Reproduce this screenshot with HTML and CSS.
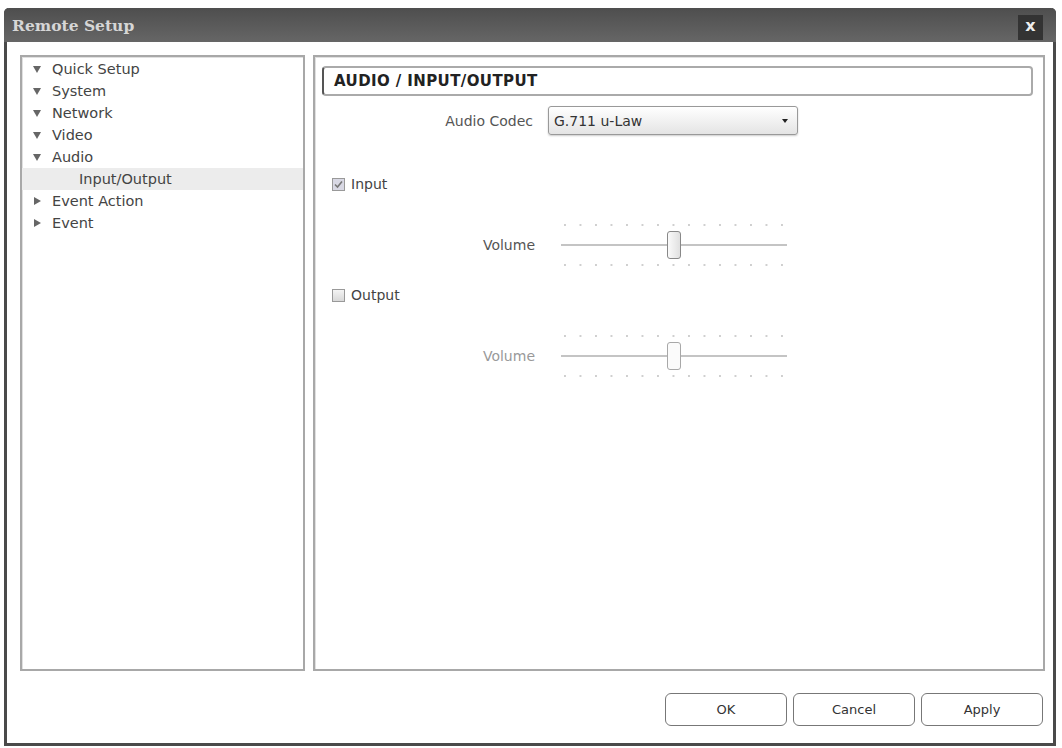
FILE: index.html
```html
<!DOCTYPE html>
<html lang="en">
<head>
    <meta charset="UTF-8">
    <title>Remote Setup</title>
    <link rel="stylesheet" href="styles.css">
</head>
<body>
    <!-- Окно настроек -->
    <div class="dialog">
        <div class="title-bar">
            <span class="title">Remote Setup</span>
            <span class="close-btn">x</span>
        </div>

        <div class="dialog-body">
            <!-- Дерево разделов -->
            <div class="tree-panel">
                <div class="tree-item"><span class="arrow down"></span>Quick Setup</div>
                <div class="tree-item"><span class="arrow down"></span>System</div>
                <div class="tree-item"><span class="arrow down"></span>Network</div>
                <div class="tree-item"><span class="arrow down"></span>Video</div>
                <div class="tree-item"><span class="arrow down"></span>Audio</div>
                <div class="tree-item sub selected">Input/Output</div>
                <div class="tree-item"><span class="arrow right"></span>Event Action</div>
                <div class="tree-item"><span class="arrow right"></span>Event</div>
            </div>

            <!-- Страница настроек -->
            <div class="content-panel">
                <div class="section-head">AUDIO / INPUT/OUTPUT</div>

                <div class="codec-row">
                    <span class="codec-label">Audio Codec</span>
                    <div class="select">
                        <span>G.711 u-Law</span>
                        <span class="select-arrow"></span>
                    </div>
                </div>

                <div class="check-row first">
                    <span class="checkbox checked">
                        <svg width="9" height="9" viewBox="0 0 9 9"><path d="M1 4.5 L3.5 7 L8 1.5" fill="none" stroke="#777" stroke-width="1.6"/></svg>
                    </span>
                    <span>Input</span>
                </div>
                <div class="volume-row">
                    <span class="volume-label">Volume</span>
                    <div class="slider">
                        <div class="ticks"></div>
                        <div class="track"><span class="thumb"></span></div>
                        <div class="ticks"></div>
                    </div>
                </div>

                <div class="check-row">
                    <span class="checkbox"></span>
                    <span>Output</span>
                </div>
                <div class="volume-row disabled">
                    <span class="volume-label">Volume</span>
                    <div class="slider">
                        <div class="ticks"></div>
                        <div class="track"><span class="thumb"></span></div>
                        <div class="ticks"></div>
                    </div>
                </div>
            </div>
        </div>

        <!-- Кнопки -->
        <div class="buttons">
            <button class="btn">OK</button>
            <button class="btn">Cancel</button>
            <button class="btn">Apply</button>
        </div>
    </div>
</body>
</html>
```

FILE: styles.css
```css
/* Общие стили */
body {
    margin: 0;
    padding: 8px 6px 0 4px;
    background-color: #ffffff;
    font-family: "DejaVu Sans", Verdana, sans-serif;
    font-size: 14px;
    color: #444;
}
/* Окно */
.dialog {
    width: 1052px;
    height: 738px;
    box-sizing: border-box;
    border: 3px solid #4a4a4a;
    border-top: none;
    border-radius: 5px 5px 0 0;
    background-color: #ffffff;
    display: flex;
    flex-direction: column;
}
.title-bar {
    height: 34px;
    margin: 0 -3px;
    padding: 0 13px 0 8px;
    background: linear-gradient(#4e4e4e, #666666);
    border-radius: 5px 5px 0 0;
    display: flex;
    align-items: center;
    justify-content: space-between;
}
.title {
    font-family: "DejaVu Serif", Georgia, serif;
    font-weight: bold;
    font-size: 15.5px;
    color: #d6d6d6;
}
.close-btn {
    width: 25px;
    height: 25px;
    margin-top: 4px;
    background-color: #333;
    color: #eee;
    font-weight: bold;
    font-size: 16px;
    line-height: 22px;
    text-align: center;
}
/* Основная часть */
.dialog-body {
    display: flex;
    gap: 8px;
    padding: 13px 8px 0 13px;
}
.tree-panel, .content-panel {
    height: 616px;
    box-sizing: border-box;
    border: 2px solid #a8a8a8;
    box-shadow: inset 1px 1px 0 #e0e0e0;
}
.tree-panel {
    width: 285px;
    padding: 1px 0 0 0;
}
.content-panel {
    width: 732px;
    padding: 9px 10px 0 7px;
}
/* Дерево */
.tree-item {
    height: 22px;
    line-height: 22px;
    padding-left: 11px;
    font-size: 14.5px;
    display: flex;
    align-items: center;
}
.tree-item.sub {
    padding-left: 57px;
}
.tree-item.selected {
    background-color: #ececec;
}
.arrow {
    width: 0;
    height: 0;
    margin-right: 11px;
}
.arrow.down {
    border-left: 4px solid transparent;
    border-right: 4px solid transparent;
    border-top: 7px solid #666;
}
.arrow.right {
    margin-left: 1px;
    margin-right: 11px;
    border-top: 4px solid transparent;
    border-bottom: 4px solid transparent;
    border-left: 7px solid #666;
}
/* Заголовок раздела */
.section-head {
    height: 26px;
    line-height: 26px;
    padding-left: 10px;
    border: 2px solid #aaa;
    border-left-color: #555;
    border-radius: 4px;
    font-weight: bold;
    font-size: 15px;
    color: #222;
    letter-spacing: 0.4px;
}
/* Кодек */
.codec-row {
    display: flex;
    align-items: center;
    margin-top: 10px;
}
.codec-label {
    width: 211px;
    text-align: right;
    margin-right: 15px;
    color: #555;
}
.select {
    width: 250px;
    height: 29px;
    box-sizing: border-box;
    border: 1px solid #999;
    border-radius: 3px;
    background: linear-gradient(#ffffff, #e4e4e4);
    box-shadow: 0 1px 2px #ccc;
    display: flex;
    align-items: center;
    justify-content: space-between;
    padding: 0 9px 0 5px;
    color: #333;
}
.select-arrow {
    border-left: 3px solid transparent;
    border-right: 3px solid transparent;
    border-top: 4px solid #222;
}
/* Флажки */
.check-row {
    display: flex;
    align-items: center;
    height: 22px;
    margin-top: 18px;
    padding-left: 10px;
    color: #444;
}
.check-row.first {
    margin-top: 38px;
}
.checkbox {
    width: 13px;
    height: 13px;
    box-sizing: border-box;
    border: 1px solid #999;
    background: linear-gradient(#f4f4f4, #d8d8d8);
    margin-right: 6px;
    display: flex;
    align-items: center;
    justify-content: center;
}
.checkbox.checked {
    background: #d8d8e4;
}
/* Громкость */
.volume-row {
    display: flex;
    align-items: center;
    margin-top: 29px;
}
.volume-label {
    width: 213px;
    text-align: right;
    margin-right: 26px;
    color: #555;
}
.volume-row.disabled .volume-label {
    color: #999;
}
.slider {
    width: 226px;
    display: flex;
    flex-direction: column;
    gap: 18px;
}
.ticks {
    height: 2px;
    margin: 0 3px;
    background-image: linear-gradient(to right, #cfcfcf 0, #cfcfcf 2px, transparent 2px);
    background-size: 15.5px 2px;
}
.track {
    position: relative;
    height: 2px;
    background-color: #c4c4c4;
}
.thumb {
    position: absolute;
    left: 106px;
    top: -13px;
    width: 14px;
    height: 28px;
    box-sizing: border-box;
    border: 1px solid #888;
    border-radius: 3px;
    background: linear-gradient(to right, #fafafa, #e0e0e0);
}
.volume-row.disabled .thumb {
    border-color: #a8a8a8;
    background: #fbfbfb;
}
/* Кнопки */
.buttons {
    display: flex;
    justify-content: flex-end;
    gap: 6px;
    padding: 22px 10px 0 0;
}
.btn {
    width: 122px;
    height: 33px;
    border: 1px solid #777;
    border-radius: 6px;
    background-color: #ffffff;
    font-family: "DejaVu Sans", Verdana, sans-serif;
    font-size: 13px;
    color: #333;
    cursor: pointer;
}
```
